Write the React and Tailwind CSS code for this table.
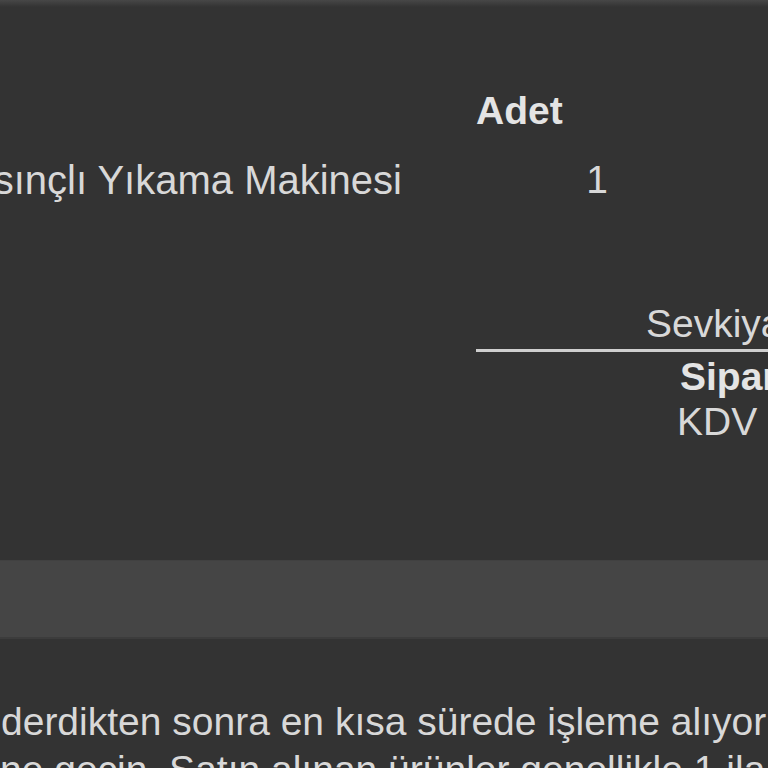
export default function App() {
  return (
    <div className="w-[768px] h-[768px] overflow-hidden bg-[#333333] text-[#d8d8d8] font-['Liberation_Sans',Arial,sans-serif] text-[39px] leading-[44px] whitespace-nowrap">
      <div className="h-[7px] bg-gradient-to-b from-[#474747] to-[#333333]" />

      {/* Table header */}
      <div className="mt-[82px] flex h-[44px]">
        <div className="w-[476px] shrink-0" />
        <div className="w-[242px] shrink-0 font-bold text-[#e4e4e4]">Adet</div>
      </div>

      {/* Product row */}
      <div className="mt-[25px] flex h-[44px]">
        <div className="w-[402px] shrink-0 flex justify-end">
          <span className="shrink-0 text-[40px]">Basınçlı Yıkama Makinesi</span>
        </div>
        <div className="w-[74px] shrink-0" />
        <div className="w-[242px] shrink-0 text-center">1</div>
      </div>

      {/* Totals */}
      <div className="mt-[100px] ml-[476px]">
        <div className="h-[44px] pl-[170px]">Sevkiyat</div>
        <div className="mt-[3px] h-[3px] bg-[#cfcfcf]" />
        <div className="mt-[3px] h-[44px] pl-[204px] font-bold text-[#e4e4e4]">Sipariş Toplamı</div>
        <div className="mt-[1px] h-[44px] pl-[201px]">KDV dahil</div>
      </div>

      {/* Band */}
      <div className="mt-[116px] h-[79px] bg-[#454545] border-t border-[#414141] border-b-2 border-b-[#3c3c3c]" />

      {/* Paragraph */}
      <div className="mt-[59px] leading-[48px]">
        <div className="pl-[1px]">derdikten sonra en kısa sürede işleme alıyoruz.</div>
        <div>ne geçin. Satın alınan ürünler genellikle 1 ila 3 iş günü</div>
      </div>
    </div>
  );
}
